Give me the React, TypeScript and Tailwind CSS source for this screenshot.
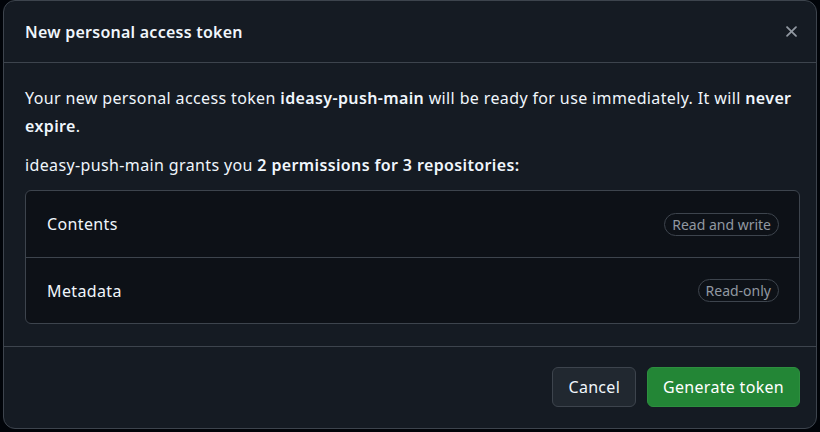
const permissions = [
  { name: 'Contents', access: 'Read and write' },
  { name: 'Metadata', access: 'Read-only' },
];

// octicon x-16
function CloseIcon() {
  return (
    <svg viewBox="0 0 16 16" width="19" height="19" fill="currentColor" aria-hidden>
      <path d="M3.72 3.72a.75.75 0 0 1 1.06 0L8 6.94l3.22-3.22a.749.749 0 0 1 1.275.326.749.749 0 0 1-.215.734L9.06 8l3.22 3.22a.749.749 0 0 1-.326 1.275.749.749 0 0 1-.734-.215L8 9.06l-3.22 3.22a.751.751 0 0 1-1.042-.018.751.751 0 0 1-.018-1.042L6.94 8 3.72 4.78a.75.75 0 0 1 0-1.06Z" />
    </svg>
  );
}

export default function App() {
  return (
    <div
      className="h-[432px] w-[820px] bg-[#010409] px-[3px] text-[#f0f6fc]"
      style={{ fontFamily: '"Noto Sans", "Open Sans", sans-serif' }}
    >
      <div className="flex h-[429px] w-[814px] flex-col rounded-[12px] border border-[#3d444d] bg-[#151b23]">
        {/* Header */}
        <div className="flex h-[62px] shrink-0 items-center justify-between border-b border-[#3d444d] pl-[21px] pr-[9px]">
          <h1 className="text-[16px] font-semibold tracking-[0.25px]">New personal access token</h1>
          <button className="flex h-8 w-8 items-center justify-center text-[#9198a1]">
            <CloseIcon />
          </button>
        </div>

        {/* Body */}
        <div className="border-b border-[#3d444d] pb-[22px] pl-[21px] pr-[16px] pt-[21px] text-[16px] leading-[28px] tracking-[0.37px]">
          <p>
            Your new personal access token <b className="font-semibold">ideasy-push-main</b> will be ready for
            use immediately. It will <b className="font-semibold">never expire</b>.
          </p>
          <p className="mt-[11px]">
            ideasy-push-main grants you <b className="font-semibold">2 permissions for 3 repositories:</b>
          </p>
          <div className="mt-[11px] rounded-[6px] border border-[#3d444d] bg-[#0d1117]">
            {permissions.map((p, i) => (
              <div
                key={p.name}
                className={
                  'flex h-[66px] items-center justify-between pl-[21px] pr-[20px]' +
                  (i > 0 ? ' border-t border-[#3d444d]' : '')
                }
              >
                <span>{p.name}</span>
                <span className="rounded-full border border-[#3d444d] px-[7px] text-[14px] leading-[21px] tracking-normal text-[#9198a1]">
                  {p.access}
                </span>
              </div>
            ))}
          </div>
        </div>

        {/* Footer */}
        <div className="flex flex-1 items-center justify-end gap-[11px] pb-[2px] pr-[16px] text-[16px] tracking-[0.3px]">
          <button className="h-[40px] rounded-[6px] border border-[#3d444d] bg-[#212830] px-[15px]">
            Cancel
          </button>
          <button className="h-[40px] rounded-[6px] border border-[#2d8f3f] bg-[#238636] px-[15px] text-white">
            Generate token
          </button>
        </div>
      </div>
    </div>
  );
}
